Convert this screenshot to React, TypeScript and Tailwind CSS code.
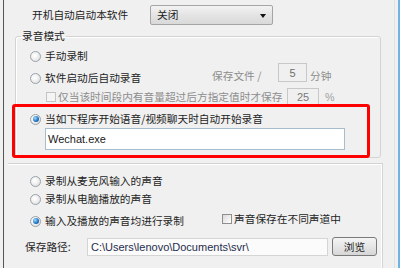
import React from 'react';

const Radio = ({ checked = false }: { checked?: boolean }) => (
  <span className="flex h-[11px] w-[11px] shrink-0 items-center justify-center rounded-full border border-[#9aa3aa] bg-[radial-gradient(circle_at_40%_40%,#ffffff_10%,#dcdcdc_90%)]">
    {checked && (
      <span className="h-[6px] w-[6px] rounded-full bg-[radial-gradient(circle_at_35%_35%,#9fdcff,#1b6fc0_60%,#0b3f80)]" />
    )}
  </span>
);

const Check = ({ disabled = false }: { disabled?: boolean }) => (
  <span
    className={
      disabled
        ? 'h-[10px] w-[10px] shrink-0 border border-[#c4c4c4] bg-[#f4f4f4]'
        : 'h-[10px] w-[10px] shrink-0 border border-[#8f8f8f] bg-[linear-gradient(135deg,#d8d8d8,#ffffff)]'
    }
  />
);

export default function App() {
  return (
    <div className="flex h-[268px] w-[400px] overflow-hidden bg-[#f0f0f0] font-['Noto_Sans_CJK_SC',sans-serif] text-[10.7px] leading-[12px] text-[#1e1e1e]">
      <div className="w-[3px]" />
      <div className="w-px bg-[#555555]" />

      <div className="flex w-[380px] flex-col">
        {/* startup option */}
        <div className="mt-[5px] flex h-[20px] items-center">
          <span className="ml-[28px] w-[118px]">开机自动启动本软件</span>
          <div className="relative flex h-[20px] w-[123px] items-center rounded-[2px] border border-[#a5a5a5] bg-[linear-gradient(#f3f3f3,#e4e4e4_50%,#d9d9d9)] pl-[6px]">
            <span>关闭</span>
            <span className="absolute right-[6px] top-[8px] h-0 w-0 border-x-[3.5px] border-t-[4px] border-x-transparent border-t-[#111111]" />
          </div>
        </div>

        {/* recording mode group */}
        <fieldset className="ml-[11px] mt-[5px] w-[366px] rounded-[3px] border border-[#d3d3d3] shadow-[inset_1px_1px_0_#ffffff]">
          <legend className="ml-[5px] px-[1px] leading-[12px]">录音模式</legend>

          <div className="mt-[4px] flex h-[20px] items-center gap-[4px] pl-[14px]">
            <Radio />
            <span>手动录制</span>
          </div>

          <div className="mt-[2px] flex h-[20px] items-start">
            <div className="flex h-[20px] w-[196px] items-center gap-[4px] pl-[14px]">
              <Radio />
              <span>软件启动后自动录音</span>
            </div>
            <span className="mt-[2px] w-[66px] text-[#8d8d8d]">保存文件 /</span>
            <div className="mt-[-5px] flex h-[19px] w-[29px] items-center justify-center border border-[#c8c8c8] font-['Liberation_Sans',sans-serif] text-[11px] text-[#6d6d6d]">
              5
            </div>
            <span className="ml-[3px] mt-[2px] text-[#8d8d8d]">分钟</span>
          </div>

          <div className="flex h-[18px] items-center pl-[30px]">
            <Check disabled />
            <span className="ml-[2px] w-[229px] text-[#8d8d8d]">仅当该时间段内有音量超过后方指定值时才保存</span>
            <div className="flex h-[18px] w-[32px] items-center justify-center border border-[#c8c8c8] font-['Liberation_Sans',sans-serif] text-[11px] text-[#7a7a7a]">
              25
            </div>
            <span className="ml-[6px] font-['Liberation_Sans',sans-serif] text-[#a0a0a0]">%</span>
          </div>

          {/* highlighted option */}
          <div className="relative z-10 -mb-[1px] ml-[-4px] mt-[-2px] h-[54px] w-[358px] rounded-[3px] border-[3px] border-[#ff0000]">
            <div className="mt-[5px] flex h-[14px] items-center gap-[4px] pl-[15px]">
              <Radio checked />
              <span>当如下程序开始语音/视频聊天时自动开始录音</span>
            </div>
            <div className="ml-[30px] mt-[2px] flex h-[22px] w-[300px] items-center border border-[#a7bccd] bg-white pl-[2px] font-['Liberation_Sans',sans-serif] text-[11px] text-[#1a1a1a]">
              Wechat.exe
            </div>
          </div>
        </fieldset>

        {/* source group */}
        <div className="ml-[4px] mt-[5px] h-[110px] w-[375px] border-r border-t border-[#d3d3d3] shadow-[inset_-1px_1px_0_#ffffff]">
          <div className="mt-[9px] flex h-[16px] items-center gap-[4px] pl-[22px]">
            <Radio />
            <span>录制从麦克风输入的声音</span>
          </div>
          <div className="mt-[2px] flex h-[16px] items-center gap-[4px] pl-[22px]">
            <Radio />
            <span>录制从电脑播放的声音</span>
          </div>
          <div className="mt-[6px] flex h-[16px] items-center">
            <div className="flex w-[214px] items-center gap-[4px] pl-[22px]">
              <Radio checked />
              <span>输入及播放的声音均进行录制</span>
            </div>
            <div className="mt-[-4px] flex items-center gap-[2px]">
              <Check />
              <span>声音保存在不同声道中</span>
            </div>
          </div>
          <div className="mt-[8px] flex h-[19px] items-center pl-[17px]">
            <span className="w-[62px]">保存路径:</span>
            <div className="flex h-[18px] w-[241px] items-center border border-[#d5d5d5] bg-[#fbfbfb] pl-[3px] font-['Liberation_Sans',sans-serif] text-[11px] text-[#1f2d4d]">
              C:\Users\lenovo\Documents\svr\
            </div>
            <div className="ml-[4px] flex h-[19px] w-[45px] items-center justify-center rounded-[3px] border border-[#7a7a7a] bg-[linear-gradient(#f4f4f4,#e6e6e6_50%,#d6d6d6)]">
              浏览
            </div>
          </div>
        </div>
      </div>

      <div className="flex w-[16px]">
        <div className="w-[10px]" />
        <div className="w-px bg-[#e2e2e2]" />
        <div className="w-[3px]" />
        <div className="w-[2px] bg-[#6fb3e3]" />
      </div>
    </div>
  );
}
